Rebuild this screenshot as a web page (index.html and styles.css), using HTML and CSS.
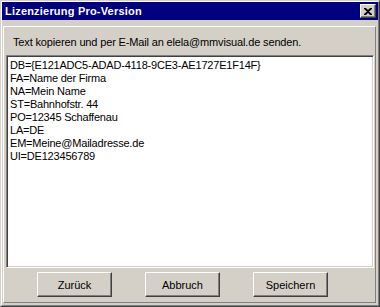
FILE: index.html
```html
<!DOCTYPE html>
<html lang="de">
<head>
  <meta charset="UTF-8">
  <title>Lizenzierung Pro-Version</title>
  <link rel="stylesheet" href="styles.css">
</head>
<body>
  <div class="window">
    <div class="frame">
      <div class="titlebar">
        <span class="title">Lizenzierung Pro-Version</span>
        <button class="close-btn" aria-label="Schließen">
          <svg width="8" height="7" viewBox="0 0 8 7">
            <path d="M0 0h2l2 2 2-2h2v1L5 3.5 8 6v1H6L4 5 2 7H0V6l3-2.5L0 1z" fill="#000"/>
          </svg>
        </button>
      </div>

      <div class="panel">
        <div class="hint">Text kopieren und per E-Mail an elela@mmvisual.de senden.</div>

        <div class="textbox">DB={E121ADC5-ADAD-4118-9CE3-AE1727E1F14F}
FA=Name der Firma
NA=Mein Name
ST=Bahnhofstr. 44
PO=12345 Schaffenau
LA=DE
EM=Meine@Mailadresse.de
UI=DE123456789</div>

        <div class="buttons">
          <button class="btn">Zurück</button>
          <button class="btn">Abbruch</button>
          <button class="btn">Speichern</button>
        </div>
      </div>
    </div>
  </div>
</body>
</html>
```

FILE: styles.css
```css
body {
  margin: 0;
  background: #d4d0c8;
  font-family: "Liberation Sans", Arial, sans-serif;
  font-size: 11px;
}

/* outer window bevel: two 1px rings */
.window {
  width: 380px;
  height: 307px;
  box-sizing: border-box;
  border: 1px solid;
  border-color: #d4d0c8 #404040 #404040 #d4d0c8;
  background: #d4d0c8;
}

.frame {
  height: 100%;
  box-sizing: border-box;
  border: 1px solid;
  border-color: #fff #808080 #808080 #fff;
  display: flex;
  flex-direction: column;
}

.titlebar {
  height: 18px;
  background: #000080;
  display: flex;
  align-items: center;
  justify-content: space-between;
  padding: 0 2px 0 3px;
}

.title {
  color: #fff;
  font-weight: bold;
  font-size: 11px;
  letter-spacing: 0.2px;
}

.close-btn {
  width: 16px;
  height: 14px;
  padding: 0;
  margin: 0;
  background: #d4d0c8;
  border: 1px solid;
  border-color: #fff #404040 #404040 #fff;
  box-shadow: inset -1px -1px #808080;
  display: flex;
  align-items: center;
  justify-content: center;
}

.close-btn svg {
  display: block;
}

.panel {
  flex: 1;
  margin: 6px 2px 2px 1px;
  border: 1px solid;
  border-color: #fff #808080 #808080 #fff;
  display: flex;
  flex-direction: column;
}

.hint {
  margin: 9px 0 0 9px;
  line-height: 13px;
  letter-spacing: -0.15px;
  color: #000;
}

.textbox {
  margin: 6px 1px 0 2px;
  height: 213px;
  box-sizing: border-box;
  background: #fff;
  border: 1px solid;
  border-color: #808080 #fff #fff #808080;
  box-shadow: inset 1px 1px #404040, inset -1px -1px #d4d0c8;
  padding: 3px 3px;
  white-space: pre;
  line-height: 13px;
  letter-spacing: -0.2px;
  color: #000;
}

.buttons {
  display: flex;
  gap: 33px;
  margin: 4px 0 0 33px;
}

.btn {
  width: 75px;
  height: 25px;
  padding: 0;
  margin: 0;
  background: #d4d0c8;
  font-family: "Liberation Sans", Arial, sans-serif;
  font-size: 11px;
  color: #000;
  border: 1px solid;
  border-color: #fff #404040 #404040 #fff;
  box-shadow: inset -1px -1px #808080;
}
```
